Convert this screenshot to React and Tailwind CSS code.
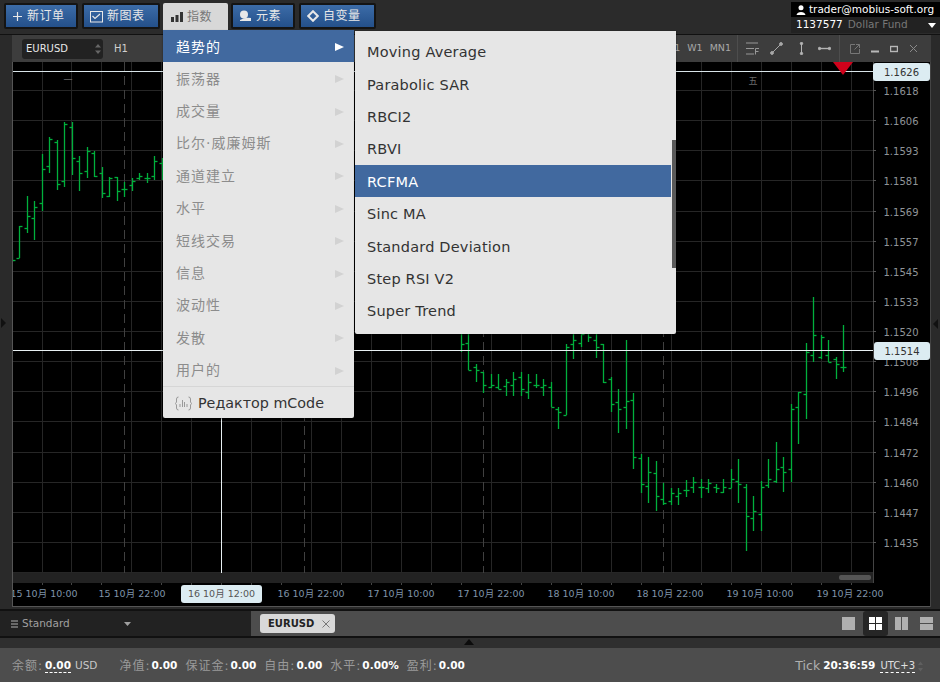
import React from "react";

const FONT = { fontFamily: '"DejaVu Sans", "Noto Sans CJK SC", sans-serif' };

// x, high, low, open, close in page pixels
const bars = [
  [12.5, 250, 262, 256, 260],
  [19.5, 226, 258, 258, 226],
  [27, 196, 233, 228, 216],
  [34.5, 201, 240, 218, 207],
  [42, 154, 211, 203, 169],
  [49.5, 137, 173, 166, 139],
  [57, 140, 190, 142, 184],
  [64.5, 122, 187, 181, 124],
  [72, 122, 175, 127, 158],
  [79.5, 156, 191, 161, 173],
  [87, 147, 178, 171, 151],
  [94.5, 151, 177, 153, 176],
  [102, 167, 198, 173, 193],
  [109.5, 177, 197, 196, 178],
  [117, 177, 201, 177, 191],
  [124.5, 182, 197, 189, 189],
  [132, 178, 191, 185, 181],
  [139.5, 173, 180, 178, 176],
  [147, 173, 183, 178, 178],
  [154.5, 156, 180, 176, 161],
  [162, 158, 180, 163, 176],
  [461, 320, 352, 320, 344],
  [468.5, 320, 370, 343, 370],
  [476, 364, 382, 367, 370],
  [483.5, 372, 393, 372, 385],
  [491, 374, 388, 387, 385],
  [498.5, 374, 389, 387, 389],
  [506, 379, 396, 386, 382],
  [513.5, 372, 396, 385, 379],
  [521, 372, 396, 377, 389],
  [528.5, 374, 399, 392, 382],
  [536, 374, 388, 385, 385],
  [543.5, 379, 396, 387, 385],
  [551, 382, 407, 387, 407],
  [558.5, 407, 429, 409, 412],
  [566, 344, 415, 415, 347],
  [573.5, 320, 359, 344, 340],
  [581, 320, 347, 343, 334],
  [588.5, 320, 342, 325, 337],
  [596, 320, 358, 340, 347],
  [603.5, 344, 383, 344, 382],
  [611, 377, 412, 379, 404],
  [618.5, 389, 433, 402, 409],
  [626, 340, 429, 407, 401],
  [633.5, 393, 469, 400, 457],
  [641, 454, 493, 458, 484],
  [648.5, 457, 503, 486, 472],
  [656, 461, 511, 473, 496],
  [663.5, 483, 505, 499, 503],
  [671, 488, 505, 501, 493],
  [678.5, 488, 505, 496, 493],
  [686, 480, 497, 490, 490],
  [693.5, 477, 493, 487, 482],
  [701, 479, 498, 487, 487],
  [708.5, 479, 493, 488, 483],
  [716, 484, 493, 487, 488],
  [723.5, 479, 493, 492, 487],
  [731, 469, 488, 488, 479],
  [738.5, 459, 503, 481, 484],
  [746, 484, 551, 487, 516],
  [753.5, 496, 531, 518, 511],
  [761, 481, 531, 514, 487],
  [768.5, 459, 488, 485, 479],
  [776, 442, 483, 481, 469],
  [783.5, 457, 492, 467, 472],
  [791, 404, 482, 469, 409],
  [798.5, 392, 444, 407, 392],
  [806, 343, 419, 394, 352],
  [813.5, 297, 362, 355, 335],
  [821, 335, 359, 357, 337],
  [828.5, 340, 362, 355, 362],
  [836, 357, 379, 359, 364],
  [843.5, 325, 372, 367, 367],
];

const prices = ["1.1618", "1.1606", "1.1593", "1.1581", "1.1569", "1.1557", "1.1545", "1.1533", "1.1520", "1.1508", "1.1496", "1.1484", "1.1472", "1.1460", "1.1447", "1.1435"];
const times = [
  [44, "15 10月 10:00"],
  [132, "15 10月 22:00"],
  [311, "16 10月 22:00"],
  [401, "17 10月 10:00"],
  [491, "17 10月 22:00"],
  [581, "18 10月 10:00"],
  [670, "18 10月 22:00"],
  [760, "19 10月 10:00"],
  [850, "19 10月 22:00"],
];
const hGrid = Array.from({ length: 17 }, (_, i) => Math.round(91 + i * 30.13) - 0.5);
const vGrid = Array.from({ length: 28 }, (_, i) => Math.round(41.5 + i * 29.97) + 0.5);

const categories = ["振荡器", "成交量", "比尔·威廉姆斯", "通道建立", "水平", "短线交易", "信息", "波动性", "发散", "用户的"];
const indicators = ["Moving Average", "Parabolic SAR", "RBCI2", "RBVI", "RCFMA", "Sinc MA", "Standard Deviation", "Step RSI V2", "Super Trend"];

const Arrow = ({ light }) => (
  <svg width="9" height="8" viewBox="0 0 9 8">
    <path d="M0 0 L9 4 L0 8 Z" fill={light ? "#ffffff" : "#d2d2d2"} />
  </svg>
);

const ToolButton = ({ icon, label, className }) => (
  <div className={`flex h-[26px] items-center gap-[4px] rounded-[2px] border-2 border-[#141414] bg-gradient-to-b from-[#3c6ca8] to-[#24508a] pl-[6px] text-[12px] tracking-[0.5px] text-[#e8e8e8] ${className}`}>
    {icon}
    <span>{label}</span>
  </div>
);

const Stat = ({ label, value, className }) => (
  <>
    <span className={`tracking-[1px] ${className}`}>{label}</span>
    <span className="ml-[1px] text-[10.5px] font-bold text-white">{value}</span>
  </>
);

const Chart = () => (
  <svg className="block h-[545px] w-[919px]" viewBox="12 62 919 545" style={FONT}>
    <rect x="12" y="62" width="919" height="545" fill="#000000" />
    {hGrid.map((y) => (
      <line key={y} x1="12" x2="873" y1={y} y2={y} stroke="#262626" strokeWidth="1" />
    ))}
    {vGrid.map((x) => (
      <line key={x} x1={x} x2={x} y1="62" y2="573" stroke="#262626" strokeWidth="1" />
    ))}
    {[124.5, 304.5, 483.5, 663.5].map((x) => (
      <line key={x} x1={x} x2={x} y1="62" y2="573" stroke="#404040" strokeDasharray="9 5" />
    ))}
    {bars.map(([rawX, high, low, open, close]) => {
      const x = Math.floor(rawX) + 0.5;
      return (
        <g key={x} stroke="#00b03c" strokeWidth="1.3">
          <line x1={x} x2={x} y1={high} y2={low} />
          <line x1={x - 3} x2={x} y1={open + 0.5} y2={open + 0.5} />
          <line x1={x} x2={x + 3} y1={close + 0.5} y2={close + 0.5} />
        </g>
      );
    })}
    <line x1="12" x2="873" y1="71.5" y2="71.5" stroke="#d8e4e8" />
    <line x1="12" x2="873" y1="350.5" y2="350.5" stroke="#e8f0f2" />
    <line x1="221.5" x2="221.5" y1="62" y2="586" stroke="#e8f0f2" />
    <path d="M833 62 H853 L843 75 Z" fill="#d0021b" />
    <text x="68" y="83" fontSize="9" fill="#6a6a6a" textAnchor="middle">一</text>
    <text x="753" y="84" fontSize="9" fill="#6a6a6a" textAnchor="middle">五</text>
    <rect x="12" y="573" width="861" height="10" fill="#222222" />
    <rect x="839" y="575" width="32" height="5" rx="2" fill="#555555" />
    {vGrid.map((x) => (
      <line key={x} x1={x} x2={x} y1="583" y2="585" stroke="#444444" />
    ))}
    <line x1="873.5" x2="873.5" y1="62" y2="583" stroke="#444444" />
    {hGrid.slice(0, 16).map((y) => (
      <line key={y} x1="873" x2="876" y1={y} y2={y} stroke="#555555" />
    ))}
    {prices.map((p, i) => (
      <text key={p} x="901" y={95 + i * 30.13} fontSize="10" fill="#8f9498" textAnchor="middle">{p}</text>
    ))}
    {times.map(([x, t]) => (
      <text key={t} x={x} y="597" fontSize="9.5" fill="#7f93a8" textAnchor="middle">{t}</text>
    ))}
    <line x1="12" x2="931" y1="606.5" y2="606.5" stroke="#555555" />
    <line x1="12.5" x2="12.5" y1="62" y2="607" stroke="#555555" />
    <line x1="930.5" x2="930.5" y1="62" y2="607" stroke="#444444" />
  </svg>
);

export default function App() {
  return (
    <div className="relative flex h-[682px] w-[940px] flex-col overflow-hidden bg-[#2a2a2a]" style={FONT}>
      <div className="flex h-[35px] border-b border-[#111111] bg-[#2b2b2b]">
        <div className="flex gap-[4px] pl-[4px] pt-[3px]">
          <ToolButton
            className="w-[74px]"
            label="新订单"
            icon={
              <svg width="11" height="11" viewBox="0 0 11 11">
                <path d="M5.5 1 V10 M1 5.5 H10" stroke="#e8e8e8" strokeWidth="1.2" />
              </svg>
            }
          />
          <ToolButton
            className="w-[78px]"
            label="新图表"
            icon={
              <svg width="13" height="13" viewBox="0 0 13 13" fill="none" stroke="#e8e8e8">
                <rect x="0.5" y="1.5" width="12" height="10.5" />
                <path d="M2.5 6 L5 8.5 L10 4" strokeWidth="1.2" />
              </svg>
            }
          />
          <div className="-ml-[1px] -mr-[1px] flex h-[28px] w-[65px] items-center gap-[4px] rounded-t-[2px] bg-[#d8d8d8] pl-[8px] text-[12px] tracking-[0.5px] text-[#777777]">
            <svg width="12" height="10" viewBox="0 0 12 10" fill="#333333">
              <rect x="0" y="5" width="3" height="5" />
              <rect x="4.5" y="3" width="3" height="7" />
              <rect x="9" y="0" width="3" height="10" />
            </svg>
            <span>指数</span>
          </div>
          <ToolButton
            className="w-[64px]"
            label="元素"
            icon={
              <svg width="13" height="12" viewBox="0 0 13 12" fill="#e8e8e8">
                <circle cx="5" cy="4.5" r="4" />
                <path d="M1 10 Q6 7 12 8 V11 H1 Z" />
              </svg>
            }
          />
          <ToolButton
            className="w-[77px]"
            label="自变量"
            icon={
              <svg width="12" height="12" viewBox="0 0 12 12" fill="none" stroke="#e8e8e8" strokeWidth="2">
                <path d="M6 1.2 L10.8 6 L6 10.8 L1.2 6 Z" />
              </svg>
            }
          />
        </div>
        <div className="ml-auto mt-[2px] flex h-[31px] w-[149px] flex-col whitespace-nowrap text-[10.5px]">
          <div className="flex h-[15px] items-center gap-[3px] bg-black pl-[5px] text-white">
            <svg width="10" height="10" viewBox="0 0 10 10" fill="#ffffff">
              <circle cx="5" cy="2.7" r="2.5" />
              <path d="M0.5 10 C1 6 9 6 9.5 10 Z" />
            </svg>
            <span>trader@mobius-soft.org</span>
          </div>
          <div className="flex h-[16px] items-center bg-[#222222] pl-[5px] pr-[4px]">
            <span className="text-white">1137577</span>
            <span className="ml-[5px] text-[#777777]">Dollar Fund</span>
            <svg className="ml-auto" width="8" height="5" viewBox="0 0 8 5">
              <path d="M0 0 H8 L4 5 Z" fill="#ffffff" />
            </svg>
          </div>
        </div>
      </div>

      <div className="flex h-[574px] flex-col">
        <div className="ml-[12px] mr-[9px] flex h-[27px] items-center bg-[#3d3d3d] text-[10px] text-[#d0d0d0]">
          <div className="ml-[10px] flex h-[20px] w-[81px] items-center justify-between rounded-[3px] bg-[#222222] pl-[4px] pr-[2px] text-[10px] text-[#e8e8e8]">
            <span>EURUSD</span>
            <svg width="6" height="12" viewBox="0 0 6 12" fill="#666666">
              <path d="M3 1 L6 4.5 H0 Z M3 11 L0 7.5 H6 Z" />
            </svg>
          </div>
          <span className="ml-[11px]">H1</span>
          <div className="ml-auto flex h-full items-center">
            <div className="flex gap-[7px] pr-[6px] text-[9.5px] text-[#a8a8a8]">
              <span>D1</span>
              <span>W1</span>
              <span>MN1</span>
            </div>
            <div className="flex h-full w-[103px] items-center border-x border-[#4d4d4d] pl-[8px]">
              <svg width="13" height="13" viewBox="0 0 13 13" fill="none" stroke="#989898">
                <path d="M0 1 H12 M0 6.5 H8 M0 12 H8" />
                <path d="M9.5 12.5 V6.5 H13 M9.5 9.5 H12.5" />
              </svg>
              <svg className="ml-[11px]" width="13" height="13" viewBox="0 0 13 13" fill="none" stroke="#a8a8a8">
                <path d="M2 11 L11 2" />
                <circle cx="2" cy="11" r="1.4" fill="#a8a8a8" />
                <circle cx="11" cy="2" r="1.4" fill="#a8a8a8" />
              </svg>
              <svg className="ml-[15px]" width="7" height="13" viewBox="0 0 7 13" fill="none" stroke="#b4b4b4">
                <path d="M3.5 1 V12" />
                <circle cx="3.5" cy="1.5" r="1.2" fill="#b4b4b4" />
                <circle cx="3.5" cy="11.5" r="1.2" fill="#b4b4b4" />
              </svg>
              <svg className="ml-[13px]" width="13" height="7" viewBox="0 0 13 7" fill="none" stroke="#b4b4b4">
                <path d="M1 3.5 H12" strokeWidth="1.4" />
                <circle cx="1.5" cy="3.5" r="1.2" fill="#b4b4b4" />
                <circle cx="11.5" cy="3.5" r="1.2" fill="#b4b4b4" />
              </svg>
            </div>
            <div className="flex w-[91px] items-center gap-[11px] pl-[10px]">
              <svg width="10" height="10" viewBox="0 0 10 10" fill="none" stroke="#777777">
                <path d="M5 0.5 H0.5 V9.5 H9.5 V5 M6 0.5 H9.5 V4 M9.5 0.5 L4.5 5.5" />
              </svg>
              <svg width="8" height="8" viewBox="0 0 8 8">
                <rect x="0" y="5.5" width="8" height="2" fill="#b8b8b8" />
              </svg>
              <svg width="8" height="8" viewBox="0 0 8 8" fill="none" stroke="#b8b8b8">
                <rect x="0.5" y="1.5" width="7" height="5" strokeWidth="1.4" />
              </svg>
              <svg width="9" height="9" viewBox="0 0 9 9" stroke="#8a8a8a">
                <path d="M1 1 L8 8 M8 1 L1 8" />
              </svg>
            </div>
          </div>
        </div>
        <div className="ml-[12px]">
          <Chart />
        </div>
      </div>

      {/* tabs */}
      <div className="flex h-[29px] border-y-2 border-t-[#111111] border-b-[#111111] text-[10.5px]">
        <div className="flex w-[251px] items-center bg-[#222222] pl-[11px] pt-[1px] text-[#a0a0a0]">
          <svg width="7" height="8" viewBox="0 0 7 8" stroke="#b0b0b0">
            <path d="M0 1 H7 M0 4 H7 M0 7 H7" />
          </svg>
          <span className="ml-[4px]">Standard</span>
          <svg className="ml-[54px]" width="7" height="4" viewBox="0 0 7 4">
            <path d="M0 0 H7 L3.5 4 Z" fill="#a0a0a0" />
          </svg>
        </div>
        <div className="flex flex-1 items-center bg-[#4d4d4d] pl-[9px] pr-[7px]">
          <div className="flex h-[19px] w-[75px] items-center gap-[8px] rounded-[3px] bg-[#d8d8d8] pl-[8px] text-[10px] font-bold text-[#222222]">
            <span>EURUSD</span>
            <svg width="8" height="8" viewBox="0 0 8 8" stroke="#777777">
              <path d="M0.5 0.5 L7.5 7.5 M7.5 0.5 L0.5 7.5" />
            </svg>
          </div>
          <div className="ml-auto flex items-center">
            <div className="h-[13px] w-[13px] bg-[#b0b0b0]" />
            <div className="ml-[8px] grid h-[25px] w-[25px] grid-cols-2 content-center justify-center gap-[1px] rounded-[3px] bg-[#262626] px-[6px]">
              <div className="h-[6px] bg-white" />
              <div className="h-[6px] bg-white" />
              <div className="h-[6px] bg-white" />
              <div className="h-[6px] bg-white" />
            </div>
            <div className="ml-[7px] flex h-[13px] w-[13px] gap-[1px]">
              <div className="flex-1 bg-[#b0b0b0]" />
              <div className="flex-1 bg-[#b0b0b0]" />
            </div>
            <div className="ml-[12px] flex h-[13px] w-[13px] flex-col gap-[1px]">
              <div className="flex-1 bg-[#b0b0b0]" />
              <div className="flex-1 bg-[#b0b0b0]" />
            </div>
          </div>
        </div>
      </div>

      <div className="flex h-[10px] justify-end bg-[#2f2f2f] pr-[466px]">
        <svg className="mt-[1px]" width="10" height="6" viewBox="0 0 10 6">
          <path d="M5 0 L10 6 H0 Z" fill="#0c0c0c" />
        </svg>
      </div>

      {/* status */}
      <div className="flex flex-1 items-center bg-[#4d4d4d] pl-[12px] pr-[17px] pt-[2px] text-[12px] text-[#9a9a9a]">
        <span className="tracking-[1px]">余额:</span>
        <span className="ml-[2px] border-b border-dashed border-white text-[10.5px] font-bold leading-[13px] text-white">0.00</span>
        <span className="ml-[4px] text-[10.5px] text-[#c8c8c8]">USD</span>
        <Stat className="ml-[22px]" label="净值:" value="0.00" />
        <Stat className="ml-[8px]" label="保证金:" value="0.00" />
        <Stat className="ml-[8px]" label="自由:" value="0.00" />
        <Stat className="ml-[8px]" label="水平:" value="0.00%" />
        <Stat className="ml-[8px]" label="盈利:" value="0.00" />
        <span className="ml-auto text-[12.5px] text-[#b0b0b0]">Tick</span>
        <span className="ml-[3px] text-[10.5px] font-bold text-white">20:36:59</span>
        <span className="ml-[5px] border-b border-dashed border-white text-[10px] leading-[13px] text-[#e0e0e0]">UTC+3</span>
        <svg className="ml-[3px]" width="5" height="11" viewBox="0 0 5 11" fill="#5f5f5f">
          <path d="M2.5 0.5 L5 4 H0 Z M2.5 10.5 L0 7 H5 Z" />
        </svg>
      </div>

      {/* price + time flags over the chart */}
      <div className="absolute left-[873px] top-[63px] flex h-[18px] w-[57px] items-center justify-center rounded-[3px] bg-[#dcecf2] text-[10px] text-[#333333]">1.1626</div>
      <div className="absolute left-[874px] top-[342px] flex h-[18px] w-[56px] items-center justify-center rounded-[3px] bg-[#dcecf2] text-[10px] text-[#333333]">1.1514</div>
      <div className="absolute left-[181px] top-[585px] flex h-[18px] w-[81px] items-center justify-center rounded-[3px] bg-[#dcecf2] text-[9.5px] text-[#555555]">16 10月 12:00</div>

      {/* indicator menu */}
      <div className="absolute left-[163px] top-[30px] w-[191px] rounded-b-[2px] bg-[#e6e6e6] text-[14px] text-[#8c8c8c] shadow-[0_1px_2px_#00000080]">
        <div className="flex h-[32px] items-center justify-between bg-[#41699f] pl-[13px] pr-[10px] pt-[2px] tracking-[1px] text-white">
          <span>趋势的</span>
          <Arrow light />
        </div>
        {categories.map((c) => (
          <div key={c} className="flex h-[32.4px] items-center justify-between pl-[13px] pr-[10px] pt-[2px] tracking-[1px]">
            <span>{c}</span>
            <Arrow />
          </div>
        ))}
        <div className="flex h-[32px] items-center gap-[6px] border-t border-[#d6d6d6] pl-[12px] pt-[2px] text-[14.3px] text-[#333333]">
          <svg width="17" height="15" viewBox="0 0 17 15" fill="none" stroke="#999999">
            <path d="M3.5 1 Q1.5 1 1.5 3 V6 L0.5 7.5 L1.5 9 V12 Q1.5 14 3.5 14 M13.5 1 Q15.5 1 15.5 3 V6 L16.5 7.5 L15.5 9 V12 Q15.5 14 13.5 14" />
            <path d="M5 8 V11 M7.5 4 V11 M9.5 6 V11 M12 8 V11" />
          </svg>
          <span>Редактор mCode</span>
        </div>
      </div>

      {/* indicators submenu */}
      <div className="absolute left-[355px] top-[31px] w-[321px] rounded-b-[2px] bg-[#e6e6e6] pb-[7.4px] pr-[5px] pt-[4px] text-[14.5px] tracking-[0.2px] text-[#333333] shadow-[0_1px_2px_#00000080]">
        {indicators.map((name) => (
          <div
            key={name}
            className={name === "RCFMA" ? "flex h-[32.4px] items-center bg-[#41699f] pl-[12px] pt-[4px] text-white" : "flex h-[32.4px] items-center pl-[12px] pt-[4px]"}
          >
            {name}
          </div>
        ))}
        <div className="absolute right-0 top-[109px] h-[128px] w-[4px] bg-[#5a5a5a]" />
      </div>

      {/* side gutter arrows */}
      <div className="absolute left-[1px] top-[318px] h-0 w-0 border-y-[5px] border-l-[5px] border-y-transparent border-l-[#111111]" />
      <div className="absolute right-[2px] top-[319px] h-0 w-0 border-y-[5px] border-r-[5px] border-y-transparent border-r-[#111111]" />
    </div>
  );
}
